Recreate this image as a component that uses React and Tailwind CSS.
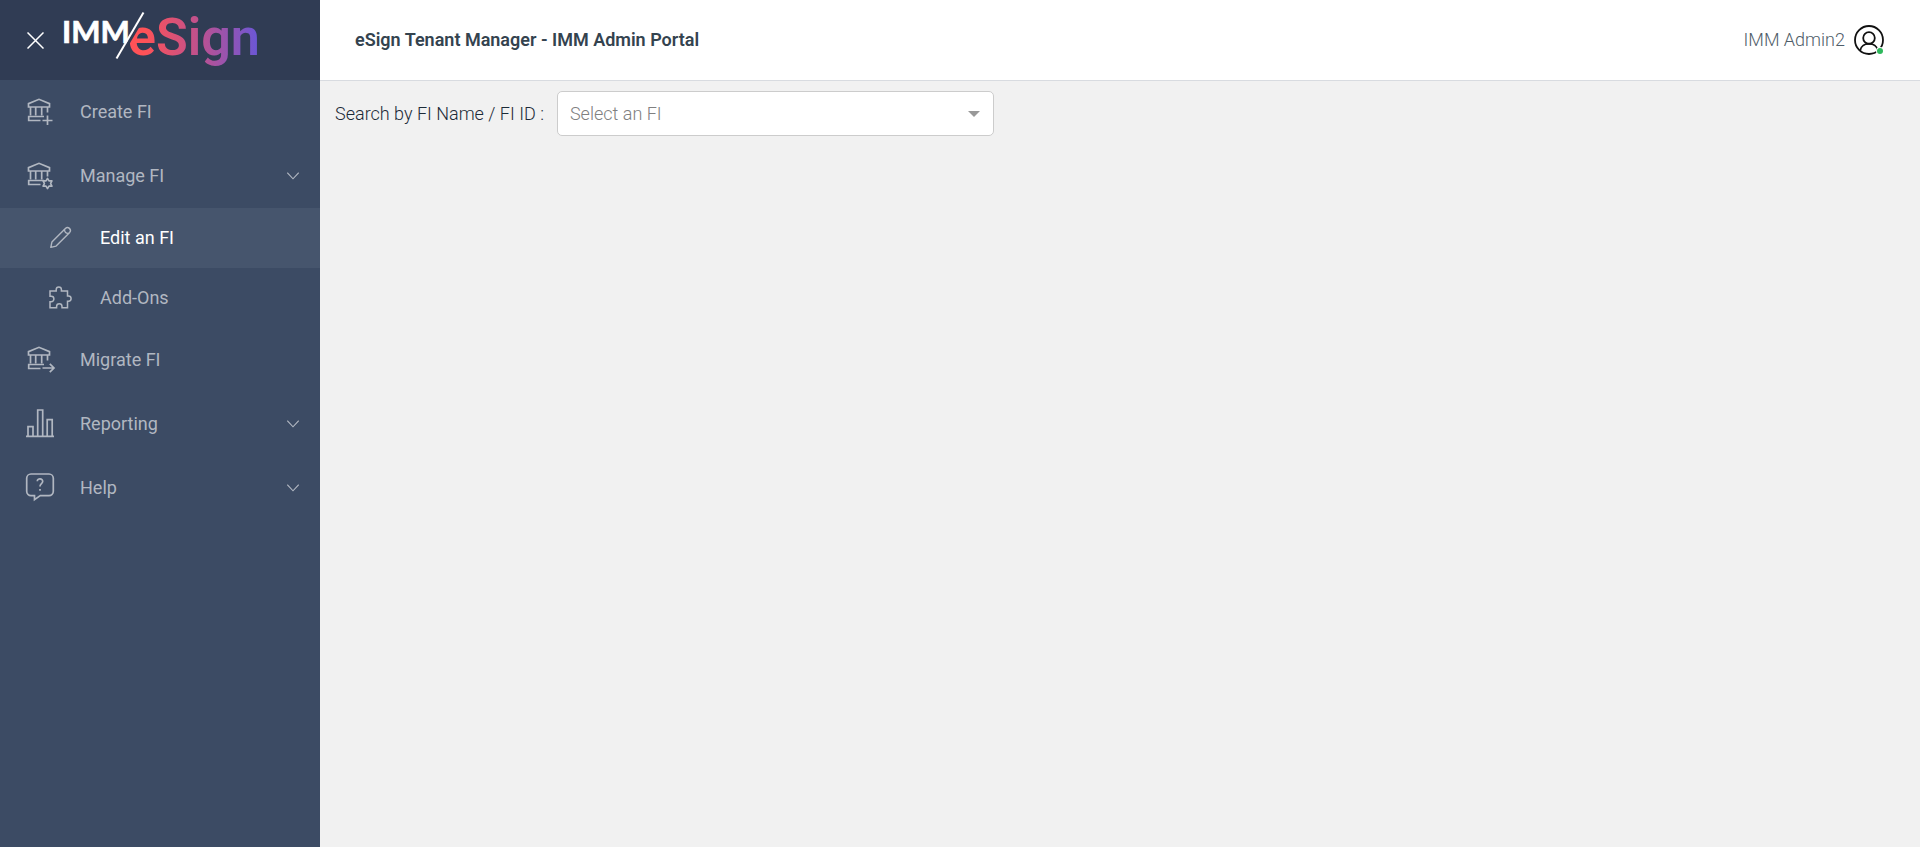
import React, { useState } from 'react';

const BankBase = ({ children }) => (
  <svg width="28" height="28" viewBox="0 0 28 28" fill="none" stroke="currentColor" strokeWidth="1.7" className="overflow-visible">
    <path d="M2.5 9V5.6L13 1.3l10.5 4.3V9z" />
    <path d="M4.5 9v8.5M9.7 9v8.5M15.7 9v8.5M21.5 9v5.5" />
    <path d="M18 18.5H2.7v4H14.5" />
    {children}
  </svg>
);

const CreateIcon = () => (
  <BankBase>
    <path d="M21.5 17.5v9.5M16.5 22.5h10" />
  </BankBase>
);

const ManageIcon = () => (
  <BankBase>
    <path d="M21.5 16.4l1.5 2.5 2.9-.1-1.3 2.7 1.3 2.7-2.9-.1-1.5 2.5-1.5-2.5-2.9.1 1.3-2.7-1.3-2.7 2.9.1z" strokeLinejoin="round" />
  </BankBase>
);

const MigrateIcon = () => (
  <BankBase>
    <path d="M16.5 22h11.3M23.8 17.8L28 22l-4.2 4.2" />
  </BankBase>
);

const ReportIcon = () => (
  <svg width="28" height="28" viewBox="0 0 28 28" fill="none" stroke="currentColor" strokeWidth="1.7" className="overflow-visible">
    <path d="M0 26.3h28M2 26V16.7h5V26M11.7 26V0h5v26M21.2 26V9.7h5V26" />
  </svg>
);

const HelpIcon = () => (
  <svg width="28" height="28" viewBox="0 0 28 28" fill="none" stroke="currentColor" strokeWidth="1.7" className="overflow-visible">
    <path d="M5 0h18a4.3 4.3 0 0 1 4.3 4.3v13a4.3 4.3 0 0 1-4.3 4.3h-8.7L8.5 25.7v-4.1H5a4.3 4.3 0 0 1-4.3-4.3v-13A4.3 4.3 0 0 1 5 0z" />
    <path d="M11.3 7.3c0-3.4 5.6-3.2 5.4.2-.1 2.2-2.7 2.2-2.7 5M14 15v1.8" />
  </svg>
);

const PencilIcon = () => (
  <svg width="22" height="22" viewBox="0 0 22 22" fill="none" stroke="currentColor" strokeWidth="1.4" strokeLinejoin="round" className="overflow-visible">
    <path d="M.8 20.4l1.1-5.3L15.4 1.4c2.7-2.6 6.6 1.2 4.3 4L6.1 19.1z" />
    <path d="M14.6 2.3c-.5 2.6 1.6 4.6 4.3 4" />
  </svg>
);

const PuzzleIcon = () => (
  <svg width="22" height="22" viewBox="0 0 22 22" fill="none" stroke="currentColor" strokeWidth="1.5" className="overflow-visible">
    <path d="M0 4h6.2V2.5a2.6 2.6 0 0 1 5.2 0V4H17.5v5h1a2.4 2.4 0 0 1 0 5.2h-1v6.5H12v-1.2a2.7 2.7 0 0 0-5.4 0v1.2H0v-6h1.2a2.7 2.7 0 0 0 0-5.4H0z" />
  </svg>
);

const Chevron = () => (
  <svg width="12" height="8" viewBox="0 0 12 8" fill="none" stroke="currentColor" strokeWidth="1.1" className="ml-auto">
    <path d="M.3.7L6 6.8 11.7.7" />
  </svg>
);

const Logo = () => (
  <svg width="200" height="80" viewBox="0 0 200 80" role="img" aria-label="IMM eSign" className="overflow-visible">
    <defs>
      <linearGradient id="brand" gradientUnits="userSpaceOnUse" x1="70" y1="0" x2="196" y2="0">
        <stop offset="0.1" stopColor="#ff5257" />
        <stop offset="0.55" stopColor="#bb5191" />
        <stop offset="1" stopColor="#6b57d6" />
      </linearGradient>
    </defs>
    <text x="0" y="43" fontSize="31" fill="#fff" stroke="#fff" strokeWidth="0.7" className="font-[Lato,sans-serif] font-bold">IMM</text>
    <text x="66" y="55" fontSize="52" fill="url(#brand)" className="font-[Roboto,sans-serif] font-semibold">eSign</text>
    <path d="M57.5 58L84.5 12" stroke="#303c54" strokeWidth="3" />
    <path d="M54.5 58.5L81.5 12.5" stroke="#fff" strokeWidth="2" />
  </svg>
);

const menu = [
  { label: 'Create FI', Icon: CreateIcon },
  {
    label: 'Manage FI',
    Icon: ManageIcon,
    expandable: true,
    children: [
      { label: 'Edit an FI', Icon: PencilIcon },
      { label: 'Add-Ons', Icon: PuzzleIcon },
    ],
  },
  { label: 'Migrate FI', Icon: MigrateIcon },
  { label: 'Reporting', Icon: ReportIcon, expandable: true },
  { label: 'Help', Icon: HelpIcon, expandable: true },
];

const NavItem = ({ item, open, active, onToggle, onSelect }) => {
  const { label, Icon, expandable, children } = item;
  const rowClass = 'flex h-16 w-full items-center gap-[26px] pl-[26px] pr-[21px] text-left hover:text-white';

  return (
    <li>
      {expandable ? (
        <button type="button" className={rowClass} aria-expanded={open} onClick={() => onToggle(label)}>
          <Icon />
          {label}
          <Chevron />
        </button>
      ) : (
        <a href="#" className={rowClass}>
          <Icon />
          {label}
        </a>
      )}
      {children && open && (
        <ul>
          {children.map((child) => (
            <li key={child.label}>
              <a
                href="#"
                onClick={() => onSelect(child.label)}
                className={`flex h-[60px] items-center gap-7 pl-[50px] ${active === child.label ? 'bg-[#46556d]' : ''}`}
              >
                <child.Icon />
                <span className={active === child.label ? 'text-white' : ''}>{child.label}</span>
              </a>
            </li>
          ))}
        </ul>
      )}
    </li>
  );
};

const Sidebar = () => {
  const [open, setOpen] = useState('Manage FI');
  const [active, setActive] = useState('Edit an FI');

  return (
    <aside className="w-80 shrink-0 bg-[#3c4b64] text-[#b1b7c1]">
      <div className="flex h-20 items-center gap-[18px] bg-[#303c54] pl-[27px]">
        <button type="button" aria-label="Close menu" className="text-white">
          <svg width="17" height="17" viewBox="0 0 17 17" stroke="currentColor" strokeWidth="1.5">
            <path d="M.5.5l16 16M16.5.5l-16 16" />
          </svg>
        </button>
        <Logo />
      </div>
      <nav>
        <ul>
          {menu.map((item) => (
            <NavItem
              key={item.label}
              item={item}
              open={open === item.label}
              active={active}
              onToggle={(label) => setOpen(open === label ? '' : label)}
              onSelect={setActive}
            />
          ))}
        </ul>
      </nav>
    </aside>
  );
};

const Header = () => (
  <header className="flex h-[81px] items-center justify-between border-b border-[#d8dbe0] bg-white pl-[35px] pr-9">
    <h1 className="font-semibold text-[#34434f]">eSign Tenant Manager - IMM Admin Portal</h1>
    <button type="button" className="flex items-center gap-[9px] font-light text-[#4f5d69]">
      IMM Admin2
      <svg width="30" height="30" viewBox="0 0 30 30" fill="none" stroke="#111" strokeWidth="1.8">
        <circle cx="15" cy="15" r="14" />
        <circle cx="15" cy="13" r="5.8" />
        <path d="M6.2 25.5c1.3-9 16.3-9 17.6 0" />
        <circle cx="26" cy="26" r="4" fill="#fff" stroke="none" />
        <circle cx="26" cy="26" r="3" fill="#2eb85c" stroke="none" />
      </svg>
    </button>
  </header>
);

export default function App() {
  return (
    <div className="flex min-h-screen bg-[#f1f1f1] font-[Roboto,sans-serif] text-lg">
      <Sidebar />
      <div className="min-w-0 flex-1">
        <Header />
        <main className="flex items-center gap-[13px] px-[15px] py-[10px]">
          <label htmlFor="fi" className="font-light text-[#1c2b38]">
            Search by FI Name / FI ID :
          </label>
          <div className="relative w-[437px]">
            <select
              id="fi"
              defaultValue=""
              className="h-[45px] w-full appearance-none rounded-[5px] border border-[#ccc] bg-white px-3 font-light text-[#808080]"
            >
              <option value="">Select an FI</option>
            </select>
            <svg width="12" height="6" viewBox="0 0 12 6" fill="#999" className="pointer-events-none absolute right-[14px] top-5">
              <path d="M0 0h12L6 6z" />
            </svg>
          </div>
        </main>
      </div>
    </div>
  );
}
